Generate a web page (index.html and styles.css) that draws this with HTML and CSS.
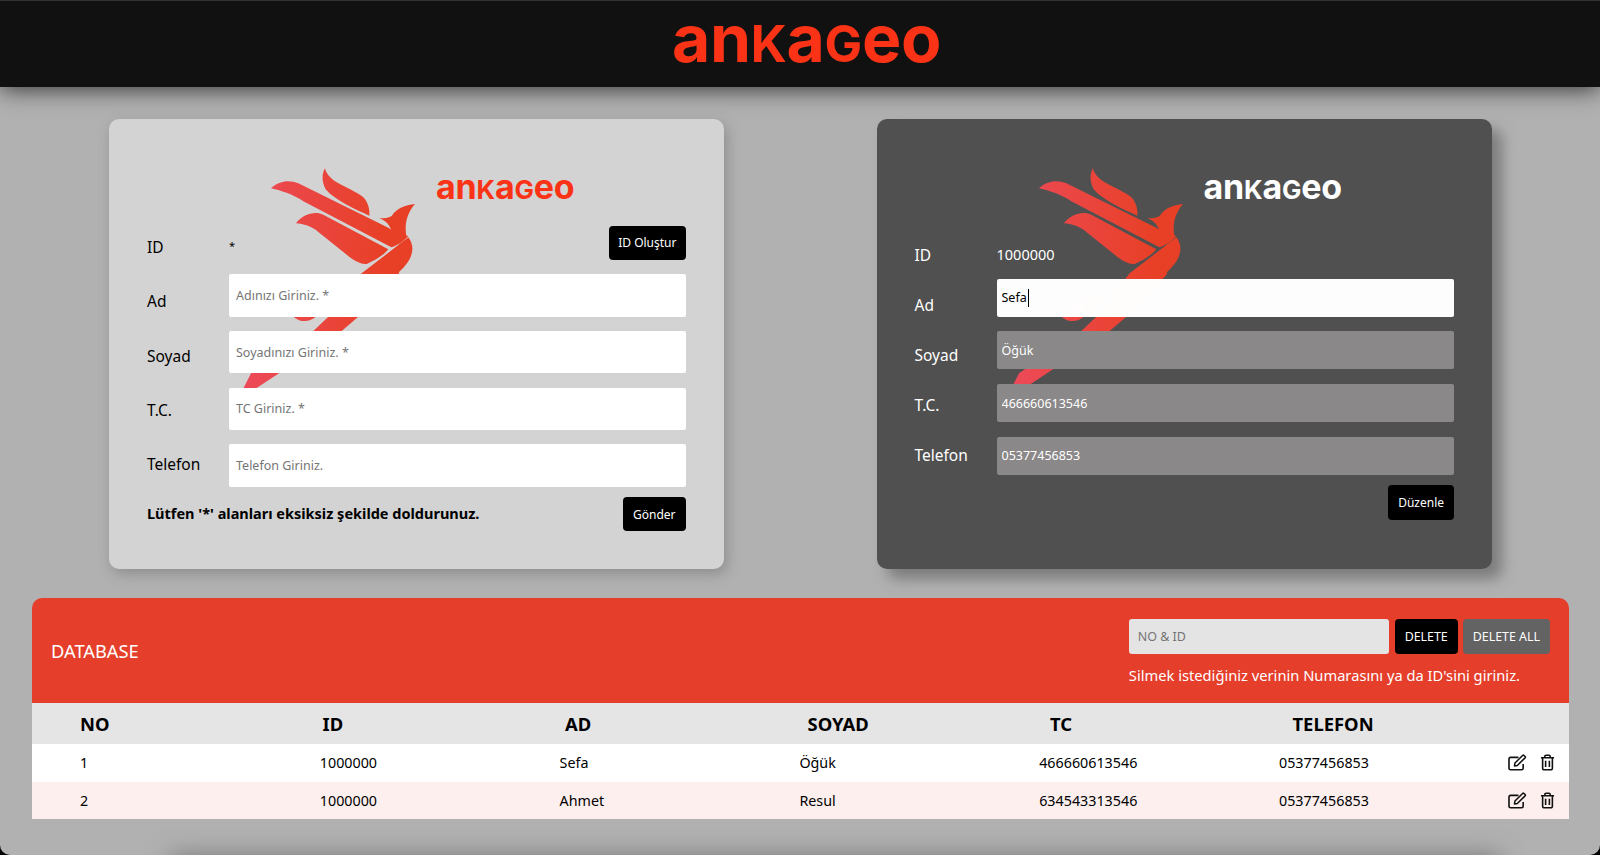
FILE: index.html
```html
<!DOCTYPE html>
<html lang="en">
<head>
  <meta charset="UTF-8">
  <meta name="viewport" content="width=device-width, initial-scale=1.0">
  <title>Ankageo</title>
  <link rel="stylesheet" href="styles.css">
</head>
<body>
<svg class="defs" width="0" height="0" aria-hidden="true">
  <defs>
    <linearGradient id="birdFill" gradientUnits="userSpaceOnUse" x1="-40" y1="0" x2="380" y2="0">
      <stop offset="0" stop-color="#ec4a58"/>
      <stop offset="1" stop-color="#e84026"/>
    </linearGradient>
    <symbol id="bird" viewBox="-60 0 570 720">
      <g fill="url(#birdFill)">
        <path d="M195 25C205 70 270 80 310 112C325 128 330 150 328 167C290 150 225 122 197 88C185 65 185 42 195 25Z"/>
        <path d="M33 85C60 60 90 60 115 70L385 203C405 218 425 226 445 228C430 245 415 255 394 262L130 124C100 104 65 92 33 85Z"/>
        <path d="M108 190C130 161 165 153 190 164L385 268C370 287 345 300 320 312C300 314 280 300 262 286L175 216C155 198 130 192 108 190Z"/>
        <path d="M465 132C435 135 410 145 395 168C385 174 372 175 358 175C378 182 392 195 398 226C410 232 425 232 440 232C432 195 440 160 465 132Z"/>
        <path d="M445 232C468 262 458 300 418 335L415 345L295 470L245 513L57 640L-9 683L-55 712L-49 683L-27 640L160 513L205 470L305 340Z"/>
        <path d="M100 470C125 490 150 486 170 468L240 400L190 400Z"/>
      </g>
    </symbol>
    <symbol id="icon-edit" viewBox="0 0 20 18">
      <path d="M16 10.5V15a1.6 1.6 0 0 1-1.6 1.6H2.6A1.6 1.6 0 0 1 1 15V5.2a1.6 1.6 0 0 1 1.6-1.6H11" fill="none" stroke="currentColor" stroke-width="1.7"/>
      <path d="M6.8 12.6l.5-3L15.4 1.5a1 1 0 0 1 1.4 0l1.2 1.2a1 1 0 0 1 0 1.4L9.8 12.1z" fill="none" stroke="currentColor" stroke-width="1.6" stroke-linejoin="round"/>
    </symbol>
    <symbol id="icon-trash" viewBox="0 0 16 18">
      <path d="M1 4h14M5.2 4V2.4A1.2 1.2 0 0 1 6.4 1.2h3.2a1.2 1.2 0 0 1 1.2 1.2V4M2.8 4v11.2a1.6 1.6 0 0 0 1.6 1.6h7.2a1.6 1.6 0 0 0 1.6-1.6V4M6 7v6.8M10 7v6.8" fill="none" stroke="currentColor" stroke-width="1.7"/>
    </symbol>
  </defs>
</svg>

<header class="topbar">
  <span class="logo logo-big">an<span class="cap">K</span>a<span class="cap">G</span>eo</span>
</header>

<section class="cards">
  <div class="card card-light">
    <svg class="bird"><use href="#bird"/></svg>
    <div class="brand"><span class="logo logo-small">an<span class="cap">K</span>a<span class="cap">G</span>eo</span></div>
    <div class="form form-light">
      <div class="labels">
        <label>ID</label>
        <label>Ad</label>
        <label>Soyad</label>
        <label>T.C.</label>
        <label>Telefon</label>
      </div>
      <div class="fields">
        <div class="id-row">
          <span class="star">*</span>
          <button class="btn btn-id">ID Oluştur</button>
        </div>
        <input type="text" placeholder="Adınızı Giriniz. *">
        <input type="text" placeholder="Soyadınızı Giriniz. *">
        <input type="text" placeholder="TC Giriniz. *">
        <input type="text" placeholder="Telefon Giriniz.">
      </div>
    </div>
    <div class="note-row">
      <strong>Lütfen '*' alanları eksiksiz şekilde doldurunuz.</strong>
      <button class="btn">Gönder</button>
    </div>
  </div>

  <div class="card card-dark">
    <svg class="bird"><use href="#bird"/></svg>
    <div class="brand"><span class="logo logo-small">an<span class="cap">K</span>a<span class="cap">G</span>eo</span></div>
    <div class="form form-dark">
      <div class="labels">
        <label>ID</label>
        <label>Ad</label>
        <label>Soyad</label>
        <label>T.C.</label>
        <label>Telefon</label>
      </div>
      <div class="fields">
        <div class="id-value">1000000</div>
        <div class="caret-wrap"><input type="text" class="active" value="Sefa"></div>
        <input type="text" value="Öğük" disabled>
        <input type="text" value="466660613546" disabled>
        <input type="text" value="05377456853" disabled>
      </div>
    </div>
    <div class="edit-row">
      <button class="btn">Düzenle</button>
    </div>
  </div>
</section>

<section class="panel">
  <div class="panel-head">
    <h2>DATABASE</h2>
    <div class="delete-box">
      <div class="delete-controls">
        <input type="text" placeholder="NO &amp; ID">
        <button class="btn">DELETE</button>
        <button class="btn btn-grey">DELETE ALL</button>
      </div>
      <p>Silmek istediğiniz verinin Numarasını ya da ID'sini giriniz.</p>
    </div>
  </div>
  <div class="table-head">
    <span>NO</span><span>ID</span><span>AD</span><span>SOYAD</span><span>TC</span><span>TELEFON</span>
  </div>
  <div class="table-row">
    <span>1</span><span>1000000</span><span>Sefa</span><span>Öğük</span><span>466660613546</span><span>05377456853</span>
    <span class="actions">
      <svg class="icon-edit"><use href="#icon-edit"/></svg>
      <svg class="icon-trash"><use href="#icon-trash"/></svg>
    </span>
  </div>
  <div class="table-row">
    <span>2</span><span>1000000</span><span>Ahmet</span><span>Resul</span><span>634543313546</span><span>05377456853</span>
    <span class="actions">
      <svg class="icon-edit"><use href="#icon-edit"/></svg>
      <svg class="icon-trash"><use href="#icon-trash"/></svg>
    </span>
  </div>
</section>
<div class="page-shadow"></div>
</body>
</html>
```
FILE: styles.css
```css
html {
  background: #000;
}

body {
  margin: 0;
  height: 855px;
  overflow: hidden;
  background: #b1b1b1;
  border-radius: 0 0 10px 10px;
  font-family: "Noto Sans", "DejaVu Sans", sans-serif;
  font-size: 15.5px;
  color: #000;
}

.defs {
  display: block;
  height: 0;
}

.topbar {
  height: 87px;
  box-sizing: border-box;
  padding: 0 0 6px 13px;
  border-top: 1px solid #333;
  background: #111;
  box-shadow: 0 2px 22px #333;
  display: flex;
  justify-content: center;
  align-items: center;
  position: relative;
}

/* wordmark, real text */
.logo {
  font-family: "Inter", "Liberation Sans", sans-serif;
  font-weight: 700;
  white-space: nowrap;
  display: inline-block;
}

.logo .cap {
  font-size: 0.76em;
}

.logo-big {
  font-size: 66px;
  line-height: 80px;
  color: #fa3316;
  letter-spacing: -0.3px;
}

.logo-small {
  font-size: 34px;
  line-height: 18px;
  letter-spacing: -0.2px;
}

.cards {
  display: flex;
  justify-content: space-between;
  padding: 32px 108px 0 109px;
}

.card {
  width: 615.5px;
  height: 450px;
  box-sizing: border-box;
  padding: 59px 38px 0;
  border-radius: 10px;
  position: relative;
}

.card-light {
  width: 614.5px;
  background: #d3d3d3;
  box-shadow: 3px 5px 14px #8e8e8e;
}

.card-dark {
  background: #505050;
  color: #fff;
  box-shadow: 10px 10px 14px #7c7c7c;
}

.card-light .logo-small {
  color: #fa3316;
}

.card-dark .logo-small {
  color: #fff;
}

/* watermark behind the form */
.bird {
  position: absolute;
  left: 131px;
  top: 41px;
  width: 190px;
  height: 240px;
}

.brand {
  position: relative;
  height: 20px;
  padding-left: 289px;
}

.form {
  position: relative;
  display: flex;
}

.form-light {
  margin-top: 22px;
}

.form-dark {
  margin-top: 32px;
}

.labels {
  width: 82px;
  flex-shrink: 0;
  display: flex;
  flex-direction: column;
}

.labels label {
  display: flex;
  align-items: center;
}

.form-light .labels label {
  height: 54.3px;
}

.form-dark .labels label {
  height: 50px;
}

.fields {
  flex: 1;
  display: flex;
  flex-direction: column;
}

.fields input {
  display: block;
  width: 100%;
  box-sizing: border-box;
  border: 0;
  outline: none;
  border-radius: 2px;
  font-family: inherit;
  font-size: 12.5px;
}

.form-light .fields {
  padding-top: 5.5px;
  gap: 14.2px;
}

.form-light .fields input {
  height: 42.5px;
  padding: 0 7px;
  background: #fff;
}

.form-dark .fields {
  padding-top: 14px;
  gap: 14.7px;
}

.form-dark .fields input {
  height: 38px;
  padding: 0 5px;
  background: #8a8888;
  color: #fff;
}

.form-dark .fields input.active {
  background: rgba(255, 255, 255, 0.99);
  color: #000;
}

/* text cursor in the field being edited */
.caret-wrap {
  position: relative;
}

.caret-wrap::after {
  content: "";
  position: absolute;
  left: 31px;
  top: 10px;
  width: 1px;
  height: 18px;
  background: #000;
}

input::placeholder {
  color: #757575;
}

.id-row {
  display: flex;
  justify-content: space-between;
  align-items: center;
  height: 34.5px;
}

.star {
  font-size: 11px;
  padding-top: 5px;
}

.id-value {
  height: 20px;
  line-height: 20px;
  font-size: 14.5px;
}

.btn {
  height: 34.5px;
  padding: 0 10px;
  border: 0;
  border-radius: 4px;
  background: #000;
  color: #fff;
  font-family: inherit;
  font-size: 12px;
}

.btn-id {
  padding: 0 9px;
}

.btn-grey {
  background: #636363;
}

.note-row {
  position: relative;
  display: flex;
  justify-content: space-between;
  align-items: center;
  margin-top: 5.5px;
}

.note-row strong {
  font-size: 14.5px;
  padding-bottom: 2px;
}

.edit-row {
  position: relative;
  display: flex;
  justify-content: flex-end;
  margin-top: 5px;
}

.panel {
  margin: 29px 31px 0 32px;
}

.panel-head {
  height: 105px;
  box-sizing: border-box;
  padding: 21px 19px 0 19px;
  background: #e53e2b;
  color: #fff;
  border-radius: 10px 10px 0 0;
  display: flex;
  justify-content: space-between;
}

.panel-head h2 {
  margin: 21px 0 0;
  font-size: 18.3px;
  font-weight: 400;
  line-height: 22px;
}

.delete-box p {
  margin: 9px 30px 0 0;
  font-size: 14.7px;
  line-height: 24px;
  text-align: right;
}

.delete-controls {
  display: flex;
  justify-content: flex-end;
  gap: 5px;
}

.delete-controls input {
  width: 260px;
  height: 35px;
  box-sizing: border-box;
  margin-right: 1px;
  padding: 0 9px;
  border: 0;
  border-radius: 3px;
  background: #e5e4e5;
  font-family: inherit;
  font-size: 12.5px;
}

.delete-controls .btn {
  height: 35px;
  padding: 0 10px;
  font-size: 12.4px;
}

.table-head {
  height: 41px;
  padding-left: 48px;
  background: #e6e5e6;
  display: grid;
  grid-template-columns: repeat(6, 242.5px);
  align-items: center;
  font-size: 18.4px;
  font-weight: 700;
}

.table-row {
  height: 37.7px;
  padding-left: 48px;
  background: #fff;
  display: grid;
  grid-template-columns: repeat(5, 239.8px) 150px 1fr;
  align-items: center;
  font-size: 14.3px;
}

.table-row:nth-child(even) {
  background: #fcefee;
}

.actions {
  display: flex;
  justify-content: flex-end;
  align-items: center;
  gap: 13px;
  padding-right: 14px;
  color: #111;
}

.icon-edit {
  width: 19px;
  height: 17px;
}

.icon-trash {
  width: 15px;
  height: 17px;
}

/* shadow of something below the fold */
.page-shadow {
  height: 40px;
  margin: 35.5px 100px 0 170px;
  box-shadow: 0 0 24px #7a7a7a;
}
```
